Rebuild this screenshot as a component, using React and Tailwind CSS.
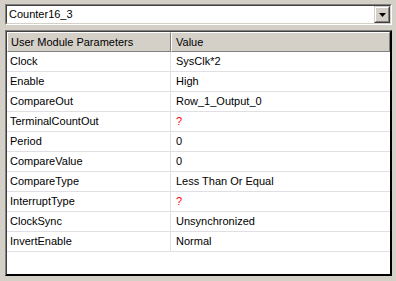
import React from "react";

const rows = [
  ["Clock", "SysClk*2"],
  ["Enable", "High"],
  ["CompareOut", "Row_1_Output_0"],
  ["TerminalCountOut", "?"],
  ["Period", "0"],
  ["CompareValue", "0"],
  ["CompareType", "Less Than Or Equal"],
  ["InterruptType", "?"],
  ["ClockSync", "Unsynchronized"],
  ["InvertEnable", "Normal"],
];

export default function App() {
  return (
    <div
      className="w-[396px] h-[281px] bg-[#d4d0c8] overflow-hidden flex flex-col pt-[4px] pl-[5px] pr-[4px] text-[11px] text-black"
      style={{ fontFamily: '"Liberation Sans", Arial, sans-serif' }}
    >
      {/* combo box */}
      <div className="h-[21px] w-[387px] border-t border-l border-t-[#808080] border-l-[#808080] border-b border-r border-b-white border-r-white">
        <div className="h-full flex border-t border-l border-t-[#404040] border-l-[#404040] border-b border-r border-b-[#d4d0c8] border-r-[#d4d0c8] bg-white">
          <div className="flex-1 pl-[2px] leading-[17px]">Counter16_3</div>
          <div className="w-[16px] h-[17px] bg-[#d4d0c8] border-t border-l border-t-[#d4d0c8] border-l-[#d4d0c8] border-b border-r border-b-[#404040] border-r-[#404040] flex items-center justify-center">
            <div className="w-full h-full border-t border-l border-t-white border-l-white border-b border-r border-b-[#808080] border-r-[#808080] flex items-center justify-center">
              <svg width="7" height="4" viewBox="0 0 7 4">
                <path d="M0 0h7L3.5 4z" fill="#000" />
              </svg>
            </div>
          </div>
        </div>
      </div>
      {/* table */}
      <div className="mt-[5px] w-[387px] h-[246px] border-t border-l border-t-[#808080] border-l-[#808080] border-b border-r border-b-[#000] border-r-[#000]">
        <div className="h-full flex flex-col bg-white border-t border-l border-t-[#404040] border-l-[#404040] border-b border-r border-b-[#000] border-r-[#000]">
          <div className="flex h-[20px] bg-[#d4d0c8]">
            <div className="w-[164px] border-t border-l border-t-white border-l-white border-b border-r border-b-[#808080] border-r-[#808080] pl-[3px] leading-[18px]">
              User Module Parameters
            </div>
            <div className="flex-1 border-t border-l border-t-white border-l-white border-b border-r border-b-[#808080] border-r-[#808080] pl-[4px] leading-[18px]">
              Value
            </div>
          </div>
          {rows.map(([k, v]) => (
            <div key={k} className="flex h-[20px] border-b border-b-[#e0dfe3]">
              <div className="w-[164px] border-r border-r-[#e0dfe3] pl-[3px] leading-[19px]">{k}</div>
              <div className={"flex-1 pl-[5px] leading-[19px] " + (v === "?" ? "text-[#ff0000]" : "")}>
                {v}
              </div>
            </div>
          ))}
        </div>
      </div>
    </div>
  );
}
